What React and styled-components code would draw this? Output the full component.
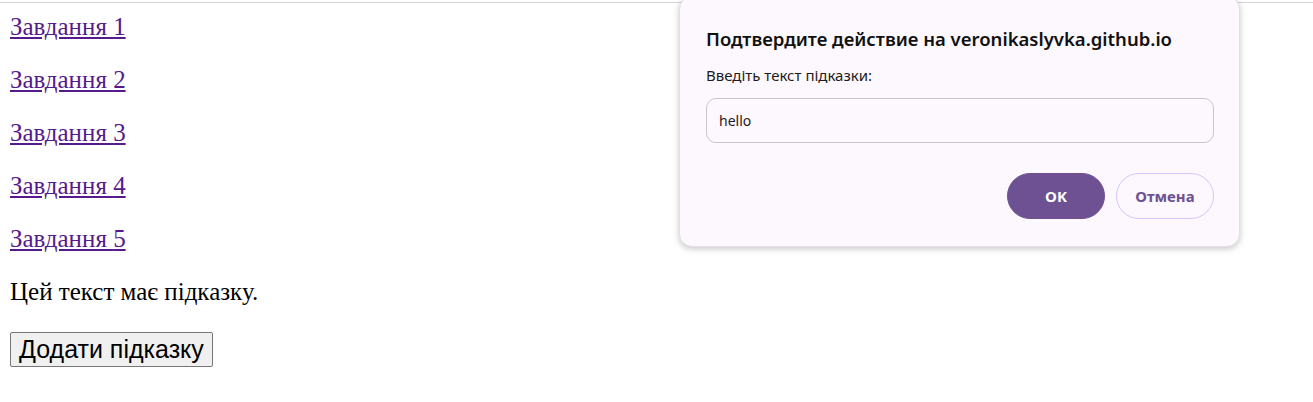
import styled, { createGlobalStyle } from 'styled-components';

const GlobalStyle = createGlobalStyle`
  html, body {
    margin: 0;
    padding: 0;
    background: #ffffff;
  }
`;

const Page = styled.div`
  position: relative;
  min-height: 402px;
  overflow: hidden;
`;

const TopRule = styled.div`
  height: 2px;
  border-bottom: 1px solid #d3d3d3;
`;

const Content = styled.div`
  display: flex;
  flex-direction: column;
  align-items: flex-start;
  gap: 26px;
  padding: 10px 0 0 10px;
  font-family: "Liberation Serif", "Times New Roman", serif;
  font-size: 25px;
  line-height: 27px;
  color: #000;
`;

const TaskLink = styled.a`
  color: #551a8b;
  text-decoration: underline;
  text-underline-offset: 2px;
`;

const Note = styled.p`
  margin: 0;
`;

const HintButton = styled.button`
  margin-top: 1px;
  font-family: "Liberation Sans", Arial, sans-serif;
  font-size: 25px;
  line-height: 27px;
  padding: 3px 8px;
  color: #000;
  background: #f0f0f0;
  border: 1px solid #767676;
  border-radius: 2px;
`;

const Dialog = styled.div`
  position: absolute;
  left: 679px;
  top: -4px;
  width: 561px;
  height: 251px;
  box-sizing: border-box;
  padding: 30px 25px 0 26px;
  background: #fdf8fd;
  border: 1px solid #e4dfe6;
  border-radius: 13px;
  box-shadow: 0 2px 6px rgba(0, 0, 0, 0.22);
  font-family: "Noto Sans", "Open Sans", sans-serif;
  color: #1d1b20;
`;

const Title = styled.h2`
  margin: 0;
  font-size: 18.5px;
  font-weight: 600;
  line-height: 24px;
  color: #111;
`;

const Label = styled.div`
  margin-top: 14px;
  font-size: 15px;
  line-height: 20px;
`;

const Field = styled.div`
  margin-top: 13px;
  height: 45px;
  box-sizing: border-box;
  display: flex;
  align-items: center;
  padding: 0 12px;
  border: 1px solid #cbc4cf;
  border-radius: 10px;
  font-size: 14px;
`;

const Actions = styled.div`
  display: flex;
  justify-content: flex-end;
  gap: 11px;
  margin-top: 30px;
`;

const ActionButton = styled.button`
  width: 98px;
  height: 46px;
  border-radius: 23px;
  font-family: "Noto Sans", "Open Sans", sans-serif;
  font-size: 15px;
  font-weight: 700;
  border: 1px solid ${(p) => (p.$primary ? '#6d5192' : '#d9c3fb')};
  background: ${(p) => (p.$primary ? '#6d5192' : 'transparent')};
  color: ${(p) => (p.$primary ? '#ffffff' : '#6d5192')};
`;

const tasks = [1, 2, 3, 4, 5];

export default function App() {
  return (
    <Page>
      <GlobalStyle />
      <TopRule />
      <Content>
        {tasks.map((n) => (
          <TaskLink key={n} href="#">Завдання {n}</TaskLink>
        ))}
        <Note>Цей текст має підказку.</Note>
        <HintButton>Додати підказку</HintButton>
      </Content>
      <Dialog>
        <Title>Подтвердите действие на veronikaslyvka.github.io</Title>
        <Label>Введіть текст підказки:</Label>
        <Field>hello</Field>
        <Actions>
          <ActionButton $primary>OK</ActionButton>
          <ActionButton>Отмена</ActionButton>
        </Actions>
      </Dialog>
    </Page>
  );
}
